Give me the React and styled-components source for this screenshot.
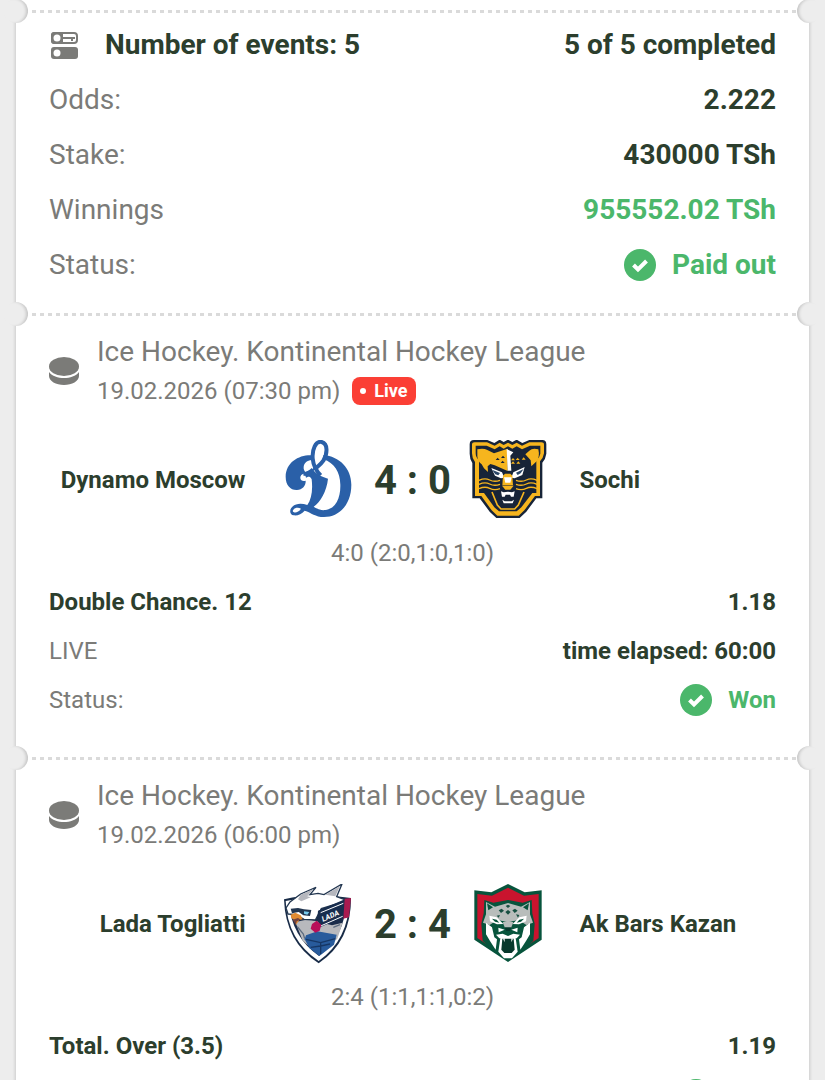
import React from 'react';
import styled, { createGlobalStyle } from 'styled-components';

const GlobalStyle = createGlobalStyle`
  * {
    box-sizing: border-box;
  }

  body {
    margin: 0;
    background: #ededed;
    color: #2c3e2d;
    font-family: Roboto, "Noto Sans", sans-serif;
  }

  h2, p, dl, dt, dd {
    margin: 0;
    font-weight: 400;
  }
`;

const Page = styled.main`
  padding: 0 16px;
`;

const Ticket = styled.article`
  padding-top: 10px;
  background: #fff;
  box-shadow: 0 0 3px 1px rgba(0, 0, 0, 0.14);
`;

const Divider = styled.div`
  position: relative;
  height: 3px;
  background: repeating-linear-gradient(90deg, #dadada 0 4px, #fff 4px 8px);

  &::before,
  &::after {
    content: '';
    position: absolute;
    top: -11px;
    width: 24px;
    height: 24px;
    border-radius: 50%;
    background: #ededed;
  }

  &::before {
    left: -12px;
    box-shadow: inset -3px 0 3px -1px rgba(0, 0, 0, 0.16);
  }

  &::after {
    right: -12px;
    box-shadow: inset 3px 0 3px -1px rgba(0, 0, 0, 0.16);
  }
`;

const Summary = styled.section`
  padding: 4px 33px 21px;
`;

const Row = styled.div`
  display: flex;
  align-items: center;
  justify-content: space-between;
  height: ${(p) => (p.$large ? 55 : 49)}px;
  font-size: ${(p) => (p.$large ? 28 : 24)}px;
`;

const Label = styled.dt`
  display: flex;
  align-items: center;
  gap: 26px;
  color: ${(p) => (p.$strong ? '#2c3e2d' : '#7b7b78')};
  font-weight: ${(p) => (p.$strong ? 700 : 400)};
`;

const Value = styled.dd`
  display: flex;
  align-items: center;
  gap: 16px;
  color: ${(p) => (p.$win ? '#4bb76b' : '#2c3e2d')};
  font-weight: 700;
`;

const Match = styled.section`
  padding: 16px 33px 33px;
`;

const MatchHeader = styled.header`
  display: flex;
  align-items: center;
  gap: 18px;
  height: 78px;
  color: #7b7b78;
`;

const League = styled.h2`
  font-size: 28px;
  line-height: 40px;
`;

const Kickoff = styled.p`
  display: flex;
  align-items: center;
  gap: 12px;
  font-size: 24px;
  line-height: 38px;
`;

const LiveBadge = styled.span`
  display: flex;
  align-items: center;
  gap: 8px;
  height: 28px;
  padding: 0 8px;
  border-radius: 8px;
  background: #fb3f35;
  color: #fff;
  font-size: 18px;
  font-weight: 700;
  line-height: 28px;

  &::before {
    content: '';
    width: 6px;
    height: 6px;
    border-radius: 50%;
    background: #fff;
  }
`;

const Teams = styled.div`
  display: grid;
  grid-template-columns: minmax(0, 1fr) 80px 110px 80px minmax(0, 1fr);
  align-items: center;
  height: 80px;
  margin-top: 30px;
`;

const Team = styled.span`
  padding-${(p) => (p.$home ? 'right' : 'left')}: 32px;
  font-size: 24px;
  font-weight: 700;
  text-align: ${(p) => (p.$home ? 'right' : 'left')};
`;

const Score = styled.strong`
  font-size: 40px;
  font-weight: 700;
  text-align: center;
`;

const Periods = styled.p`
  margin: 17px 0 8px;
  color: #7b7b78;
  font-size: 24px;
  line-height: 32px;
  text-align: center;
`;

const Crest = styled.svg`
  display: block;
  width: 80px;
  height: 80px;
`;

function EventsIcon() {
  return (
    <svg width="30" height="30" viewBox="0 0 30 30" fill="none">
      <rect x="3" y="3" width="25" height="10" rx="3" stroke="#7b7b78" strokeWidth="2" />
      <path d="M5 2h9v12H5a3 3 0 0 1-3-3V5a3 3 0 0 1 3-3z" fill="#7b7b78" />
      <circle cx="8" cy="8" r="3.5" fill="#fff" />
      <path d="M14 8h12M23 8v3" stroke="#7b7b78" strokeWidth="2" />
      <rect x="2" y="17" width="27" height="12" rx="3" fill="#7b7b78" />
      <circle cx="8" cy="23" r="3.5" fill="#fff" />
    </svg>
  );
}

function PuckIcon() {
  return (
    <svg width="30" height="30" viewBox="0 0 30 30" fill="#7b7b78">
      <ellipse cx="15" cy="10.5" rx="15" ry="9.5" />
      <path d="M0 16c3 4 9 6 15 6s12-2 15-6v4c0 5-7 9-15 9S0 25 0 20z" />
    </svg>
  );
}

function CheckIcon() {
  return (
    <svg width="32" height="32" viewBox="0 0 32 32">
      <circle cx="16" cy="16" r="16" fill="#4bb76b" />
      <path d="M9.5 16l4.5 4.5 8.5-8.5" fill="none" stroke="#fff" strokeWidth="4" />
    </svg>
  );
}

function DynamoCrest() {
  return (
    <Crest viewBox="24 30 240 240" fill="#2a60a8" role="img" aria-label="Dynamo Moscow">
      <path d="M123 76C86 75 48 97 47 140c0 26 15 41 34 40 16-1 27-13 26-28-7 3-16 0-16-8 0-9 8-14 17-14-5-8-8-13-7-20 2-12 10-18 24-20z" />
      <path d="M160 75c48 4 84 40 84 89 0 57-34 97-82 97-26 0-38-13-58-19-9 10-22 16-33 14-12-2-14-17-4-26 12-11 29-10 45-5 12-18 17-43 13-77-3-7-12-12-24-10l-2-12c12 0 20-5 26-12 8 14 27 26 49 32-4 38-23 70-43 84 12 7 22 12 35 10 33-4 46-39 45-76-1-38-18-65-51-76z" />
      <path d="M70 239c5-6 15-7 23-3-6 9-15 13-21 11-4-1-5-4-2-8z" fill="#fff" />
      <path
        d="M132 120c7-8 18-13 28-28 12-19 15-51-5-56-18-4-29 22-27 49 2 22 10 37 24 51"
        fill="none"
        stroke="#2a60a8"
        strokeWidth="12"
      />
      <path d="M104 128l30-14-7 20-19 9z" />
    </Crest>
  );
}

function SochiCrest() {
  return (
    <Crest viewBox="3 9 240 240" role="img" aria-label="Sochi">
      <path d="M8 22q0-13 13-13h40l21 9 16-10 12 7 13-7 13 7 13-7 17 10 21-9h39q12 0 12 13v28q-2 16-12 27v107h-18l-30 40-20 19H88l-20-19-30-40H16V78Q8 66 8 50z" fill="#172438" />
      <path d="M15 23q0-7 8-7h37l23 10 15-9 12 7 13-7 13 7 13-7 16 9 22-10h36q8 0 8 7v26q-2 14-12 24v104h-15l-32 43-17 16H91l-17-16-31-43H24V75Q15 64 15 49z" fill="#f6b51e" />
      <path d="M26 26h33l24 11 15-9 12 7 13-7 13 7 13-7 16 9 24-11h31v24q-2 12-12 20v98h-12l-33 43-14 12H96l-14-12-31-43H36V70q-10-9-10-21z" fill="#172438" />
      <path d="M31 37q18-5 30 2l20 10 41-14v67L83 85l-13-4-8 7 1 17-12-11-7-12q-12-9-13-24z" fill="#f6b51e" />
      <path d="M214 37q-18-5-27 4l-12 11 16 18 2 18 16-15q10-14 5-36z" fill="#f6b51e" />
      <path d="M119 36l20 10-9 10 3 45h-11z" fill="#fff" />
      <path d="M86 69l6-7 6 7zm16-6l6-7 6 7zm-1 15l6-7 6 7z" fill="#172438" />
      <path d="M132 70l6-7 6 7zm14-1l6-7 6 7zm18-1l6-7 6 7zm-32 12l6-7 6 7zm16 0l6-7 6 7z" fill="#f6b51e" />
      <path d="M73 93l32 13 7 16-10 2-18-8zM173 90l-34 16-6 16 10 2 23-10z" fill="#fff" />
      <path d="M75 98l24 10-5 7-9-3zM170 96l-23 11 5 7 9-5z" fill="#2a4667" />
      <path d="M108 116l6-6h16l6 6 2 29h-32z" fill="#f6b51e" />
      <path d="M111 121h23l-4 16h-15z" fill="#fff" />
      <path d="M105 146h35l-10 12h-15z" fill="#f6b51e" />
      <path
        d="M36 130q18-8 32-1t31 1M36 142q18-8 32-1t31 1M36 155q18-8 32-1t31 1M210 130q-18-8-32-1t-31 1M210 142q-18-8-32-1t-31 1M210 155q-18-8-32-1t-31 1"
        fill="none"
        stroke="#f6b51e"
        strokeWidth="4"
      />
      <path d="M102 163l8 3 13-2 12 2 8-3-3 16h-8l-3-6h-13l-3 6h-8z" fill="#fff" />
      <path d="M106 188l7 5h21l7-5-4 11h-27z" fill="#fff" />
      <path d="M75 165l16 39 11 12h41l11-12 17-39" fill="none" stroke="#f6b51e" strokeWidth="5" />
    </Crest>
  );
}

function LadaCrest() {
  return (
    <Crest viewBox="-6 12 240 240" role="img" aria-label="Lada Togliatti">
      <path d="M12 58q50-12 100-12t101 8q1 130-97 196Q16 186 12 58z" fill="#182b47" />
      <path d="M17 63q48-11 96-11t95 7q-2 120-92 184Q22 180 17 63z" fill="#fff" />
      <path d="M27 70q45-9 87-9t85 6q-5 102-82 161Q35 171 27 70z" fill="#1a2c4a" />
      <path d="M46 126l40-8 70 18 32-8-16 48-54 48-50-42z" fill="#b8b9bd" />
      <path d="M52 140l18 22 4 14M160 142l20-8" stroke="#5d6c80" strokeWidth="4" fill="none" />
      <path d="M78 166l34-12 58 10-8 30-44 34-30-24-14-26z" fill="#285b9c" />
      <path d="M78 178l44 10 44-12M92 202l30-4 28-6M122 188v34" fill="none" stroke="#163765" strokeWidth="4" />
      <path d="M30 66l32-24 46-20-18 22 24-4 18 4 54-32-16 38 32 12-78 24-18 34-34-2-24-14-24-2-6-18z" fill="#fff" stroke="#223650" strokeWidth="4" />
      <path d="M62 44l38-17-18 22 10 3-28 12-10-6zM136 44l44-26-14 31z" fill="#b5b7be" />
      <path d="M32 86l22-2 18 4 22 2-4 18-20-2-14-10-20 4z" fill="#223650" />
      <path d="M72 94l16 2-6 8-10-3z" fill="#79cbee" />
      <path d="M32 104l14-6 16 8 6 12-10 2-10 14-6-14-8-6z" fill="#e18b32" />
      <path d="M38 119l16-5 8 5-12 5-3 10z" fill="#74433d" />
      <path d="M114 92l84-36 14-2-10 58-24 4-58 26-8-24z" fill="#182d4e" />
      <path d="M194 56l19-2-6 58-17 4z" fill="#a91b50" />
      <path d="M122 98l68-28M122 138l66-29" stroke="#fff" strokeWidth="3" />
      <text x="129" y="125" transform="rotate(-23 129 125)" fill="#fff" fontFamily="Roboto, sans-serif" fontSize="22" fontWeight="700" fontStyle="italic">LADA</text>
      <path d="M96 132l14-10 14 12-5 18-13 6-14-12z" fill="#b80e59" />
    </Crest>
  );
}

function AkBarsCrest() {
  return (
    <Crest viewBox="-6 12 240 240" role="img" aria-label="Ak Bars Kazan">
      <path d="M13 31l51 6 50-25 50 25 51-6v148l-101 67-101-67z" fill="#07543c" />
      <path d="M22 42l44 5 48-24 48 24 44-5v132l-92 61-92-61z" fill="#c9142e" />
      <path d="M43 60l27 8 44-8 44 8 27-8 2 40 7 31-4 51-35 35-41 24-41-24-35-35-4-51 7-31z" fill="#07543c" />
      <path d="M48 66l27 14 39-11 39 11 27-14v37l9 25-20 7-22-15-33 6-33-6-22 15-20-7 9-25z" fill="#b8bdbb" />
      <path d="M51 70l18 12-14 9zM177 70l-18 12 14 9z" fill="#07543c" />
      <path d="M107 78l7-4 7 4-7 6zM86 91l9-5 7 6-9 7zm20 5l8-6 8 6-8 8zm21-5l8-5 8 6-9 7zM80 107l10-2-4 8zm68-2l-10-2 6 10z" fill="#164f41" />
      <path d="M58 107l22 5 20 20-19 1-21-9zM170 107l-22 5-20 20 19 1 21-9z" fill="#fff" />
      <path d="M66 116l14 3 8 9-13-3zM162 116l-14 3-8 9 13-3z" fill="#07543c" />
      <path d="M48 128l18 14 7 30 8 6-4 31-17-26-12-20zM180 128l-18 14-7 30-8 6 4 31 17-26 12-20z" fill="#fff" />
      <path d="M85 143l19 6-18 8zM143 143l-19 6 18 8zM78 164l20-3 16 7 16-7 20 3-10 11h-52z" fill="#fff" />
      <path d="M98 127l16-5 16 5-6 15-10 8-10-8z" fill="#b8bdbb" />
      <path d="M103 142h22l-6 11h-10z" fill="#07382c" />
      <path d="M92 168h44l7 47-17 20h-24l-17-20z" fill="#fff" />
      <path d="M97 176h34l3 33-9 10h-22l-9-10z" fill="#07382c" />
      <path d="M99 176l5-2v13zM129 176l-5-2v13z" fill="#fff" />
    </Crest>
  );
}

const matches = [
  {
    id: 1,
    date: '19.02.2026 (07:30 pm)',
    live: true,
    home: 'Dynamo Moscow',
    away: 'Sochi',
    HomeCrest: DynamoCrest,
    AwayCrest: SochiCrest,
    score: '4 : 0',
    periods: '4:0 (2:0,1:0,1:0)',
    bet: 'Double Chance. 12',
    odds: '1.18',
    elapsed: 'time elapsed: 60:00',
  },
  {
    id: 2,
    date: '19.02.2026 (06:00 pm)',
    home: 'Lada Togliatti',
    away: 'Ak Bars Kazan',
    HomeCrest: LadaCrest,
    AwayCrest: AkBarsCrest,
    score: '2 : 4',
    periods: '2:4 (1:1,1:1,0:2)',
    bet: 'Total. Over (3.5)',
    odds: '1.19',
  },
];

function MatchCard({ match }) {
  const { HomeCrest, AwayCrest } = match;

  return (
    <Match>
      <MatchHeader>
        <PuckIcon />
        <div>
          <League>Ice Hockey. Kontinental Hockey League</League>
          <Kickoff>
            {match.date}
            {match.live && <LiveBadge>Live</LiveBadge>}
          </Kickoff>
        </div>
      </MatchHeader>
      <Teams>
        <Team $home>{match.home}</Team>
        <HomeCrest />
        <Score>{match.score}</Score>
        <AwayCrest />
        <Team>{match.away}</Team>
      </Teams>
      <Periods>{match.periods}</Periods>
      <dl>
        <Row>
          <Label $strong>{match.bet}</Label>
          <Value>{match.odds}</Value>
        </Row>
        {match.elapsed && (
          <Row>
            <Label>LIVE</Label>
            <Value>{match.elapsed}</Value>
          </Row>
        )}
        <Row>
          <Label>Status:</Label>
          <Value $win>
            <CheckIcon />
            Won
          </Value>
        </Row>
      </dl>
    </Match>
  );
}

function App() {
  return (
    <>
      <GlobalStyle />
      <Page>
        <Ticket>
          <Divider />
          <Summary>
            <dl>
              <Row $large>
                <Label $strong>
                  <EventsIcon />
                  Number of events: 5
                </Label>
                <Value>5 of 5 completed</Value>
              </Row>
              <Row $large>
                <Label>Odds:</Label>
                <Value>2.222</Value>
              </Row>
              <Row $large>
                <Label>Stake:</Label>
                <Value>430000 TSh</Value>
              </Row>
              <Row $large>
                <Label>Winnings</Label>
                <Value $win>955552.02 TSh</Value>
              </Row>
              <Row $large>
                <Label>Status:</Label>
                <Value $win>
                  <CheckIcon />
                  Paid out
                </Value>
              </Row>
            </dl>
          </Summary>
          {matches.map((match) => (
            <React.Fragment key={match.id}>
              <Divider />
              <MatchCard match={match} />
            </React.Fragment>
          ))}
        </Ticket>
      </Page>
    </>
  );
}

export default App;
